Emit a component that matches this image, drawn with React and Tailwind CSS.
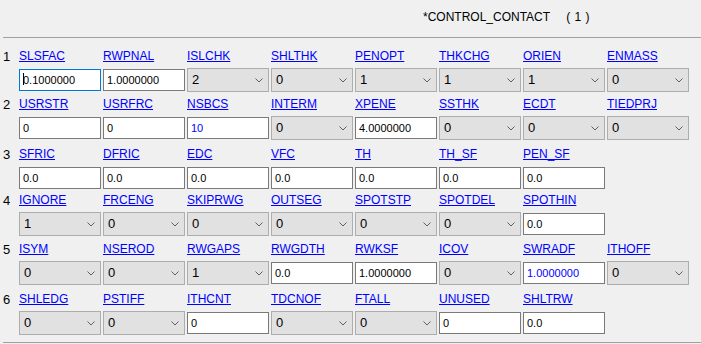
import React from 'react';

// row data: t = 'i' (edit box) or 's' (combo box)
const rows = [
  {
    n: '1',
    gap: 'mb-[4px]',
    cells: [
      { l: 'SLSFAC', t: 'i', v: '0.1000000', focus: true },
      { l: 'RWPNAL', t: 'i', v: '1.0000000' },
      { l: 'ISLCHK', t: 's', v: '2' },
      { l: 'SHLTHK', t: 's', v: '0' },
      { l: 'PENOPT', t: 's', v: '1' },
      { l: 'THKCHG', t: 's', v: '1' },
      { l: 'ORIEN', t: 's', v: '1' },
      { l: 'ENMASS', t: 's', v: '0' },
    ],
  },
  {
    n: '2',
    gap: 'mb-[6px]',
    cells: [
      { l: 'USRSTR', t: 'i', v: '0' },
      { l: 'USRFRC', t: 'i', v: '0' },
      { l: 'NSBCS', t: 'i', v: '10', blue: true },
      { l: 'INTERM', t: 's', v: '0' },
      { l: 'XPENE', t: 'i', v: '4.0000000' },
      { l: 'SSTHK', t: 's', v: '0' },
      { l: 'ECDT', t: 's', v: '0' },
      { l: 'TIEDPRJ', t: 's', v: '0' },
    ],
  },
  {
    n: '3',
    gap: 'mb-[2px]',
    cells: [
      { l: 'SFRIC', t: 'i', v: '0.0' },
      { l: 'DFRIC', t: 'i', v: '0.0' },
      { l: 'EDC', t: 'i', v: '0.0' },
      { l: 'VFC', t: 'i', v: '0.0' },
      { l: 'TH', t: 'i', v: '0.0' },
      { l: 'TH_SF', t: 'i', v: '0.0' },
      { l: 'PEN_SF', t: 'i', v: '0.0' },
    ],
  },
  {
    n: '4',
    gap: 'mb-[5px]',
    cells: [
      { l: 'IGNORE', t: 's', v: '1' },
      { l: 'FRCENG', t: 's', v: '0' },
      { l: 'SKIPRWG', t: 's', v: '0' },
      { l: 'OUTSEG', t: 's', v: '0' },
      { l: 'SPOTSTP', t: 's', v: '0' },
      { l: 'SPOTDEL', t: 's', v: '0' },
      { l: 'SPOTHIN', t: 'i', v: '0.0' },
    ],
  },
  {
    n: '5',
    gap: 'mb-[6px]',
    cells: [
      { l: 'ISYM', t: 's', v: '0' },
      { l: 'NSEROD', t: 's', v: '0' },
      { l: 'RWGAPS', t: 's', v: '1' },
      { l: 'RWGDTH', t: 'i', v: '0.0' },
      { l: 'RWKSF', t: 'i', v: '1.0000000' },
      { l: 'ICOV', t: 's', v: '0' },
      { l: 'SWRADF', t: 'i', v: '1.0000000', blue: true },
      { l: 'ITHOFF', t: 's', v: '0' },
    ],
  },
  {
    n: '6',
    gap: 'mb-[7px]',
    cells: [
      { l: 'SHLEDG', t: 's', v: '0' },
      { l: 'PSTIFF', t: 's', v: '0' },
      { l: 'ITHCNT', t: 'i', v: '0' },
      { l: 'TDCNOF', t: 's', v: '0' },
      { l: 'FTALL', t: 's', v: '0' },
      { l: 'UNUSED', t: 'i', v: '0' },
      { l: 'SHLTRW', t: 'i', v: '0.0' },
    ],
  },
];

const Chevron = () => (
  <svg width="8" height="5" viewBox="0 0 8 5" className="shrink-0">
    <polyline points="0.5,0.5 4,4 7.5,0.5" fill="none" stroke="#606060" strokeWidth="1" />
  </svg>
);

const Field = ({ cell }) => {
  if (cell.t === 's') {
    return (
      <div className="w-[82px] h-[24px] bg-[#e1e1e1] border border-[#adadad] flex items-center justify-between pl-[4px] pr-[5px] text-[13px] leading-[16px] text-black">
        <span>{cell.v}</span>
        <Chevron />
      </div>
    );
  }
  return (
    <div
      className={`relative w-[82px] h-[22px] bg-white border flex items-center pl-[3px] pb-[1px] text-[11px] leading-[14px] ${
        cell.focus ? 'border-[#0078d7]' : 'border-[#7a7a7a]'
      } ${cell.blue ? 'text-[#0000ff]' : 'text-black'}`}
    >
      {cell.v}
      {cell.focus && <span className="absolute left-[3px] top-[3px] w-px h-[12px] bg-black" />}
    </div>
  );
};

export default function App() {
  return (
    <div className="w-[701px] h-[344px] overflow-hidden bg-[#f0f0f0] font-['Liberation_Sans',Arial,sans-serif] text-black">
      <div className="h-[37px] pt-[9px] pl-[423px] flex text-[12px] leading-[16px]">
        <span>*CONTROL_CONTACT</span>
        <span className="ml-[16px] tracking-[0.5px] whitespace-pre">{'( 1 )'}</span>
      </div>
      <div className="ml-[3px] h-px bg-[#a0a0a0]" />

      <div className="pt-[10px]">
        {rows.map((row) => (
          <div key={row.n} className={`flex ${row.gap}`}>
            <div className="w-[19px] pl-[3px] text-[13px] leading-[16px] pt-[1px]">{row.n}</div>
            <div className="grid grid-cols-[repeat(8,82px)] gap-x-[2px]">
              {row.cells.map((cell) => (
                <div key={cell.l} className="flex flex-col">
                  <a className="h-[16px] text-[12px] leading-[16px] text-[#0000ff] underline cursor-pointer">
                    {cell.l}
                  </a>
                  <div className="mt-[4px] h-[24px] flex items-center">
                    <Field cell={cell} />
                  </div>
                </div>
              ))}
            </div>
          </div>
        ))}
      </div>

      <div className="ml-[3px] h-px bg-[#a0a0a0]" />
    </div>
  );
}
